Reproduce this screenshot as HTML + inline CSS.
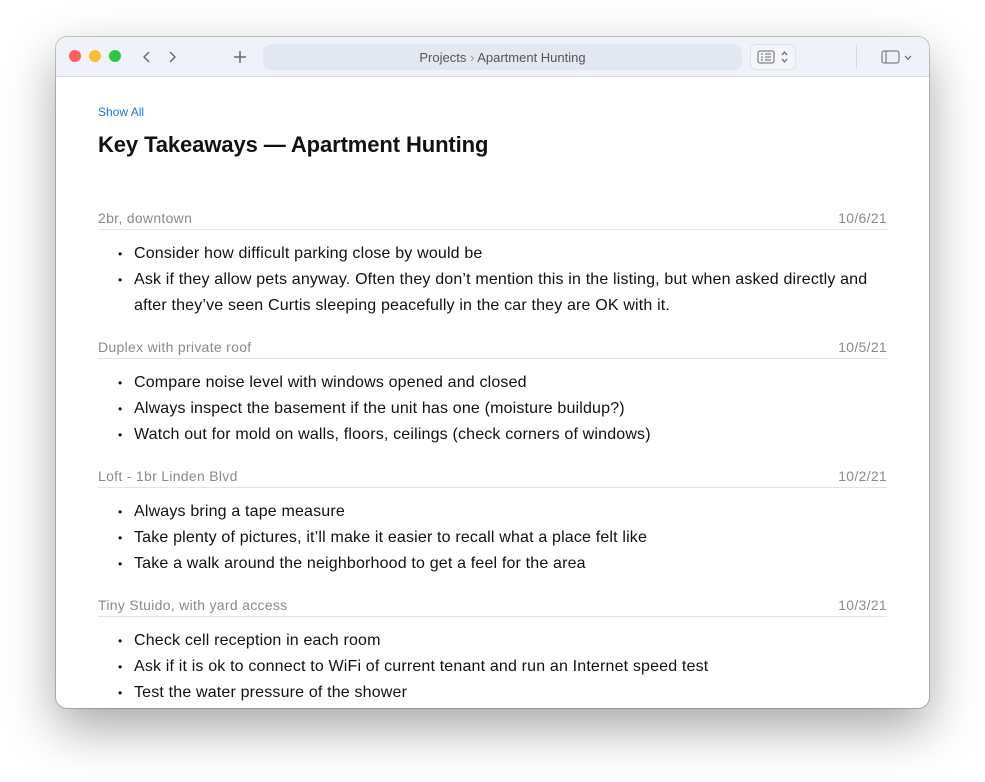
<!DOCTYPE html>
<html><head><style>
body{margin:0;width:985px;height:782px;background:#fff;font-family:"Liberation Sans",sans-serif;position:relative;overflow:hidden}
.win{position:absolute;left:56px;top:37px;width:873px;height:671px;border-radius:11px;background:#fff;overflow:hidden;box-shadow:0 20px 50px rgba(0,0,0,.35),0 0 0 1px rgba(0,0,0,.2)}
.tb{position:absolute;left:0;top:0;width:873px;height:39px;background:#eff2f9;border-bottom:1px solid #d9d9dc}
.dot{position:absolute;top:13px;width:12px;height:12px;border-radius:50%}
.t{position:absolute;white-space:nowrap;line-height:26px}
.h{font-size:14px;color:#8a8a8e;letter-spacing:.3px}
.b{font-size:16px;color:#111;letter-spacing:.17px}
.d{font-size:12px}
.r{position:absolute;left:42px;width:789px;height:1px;background:#e3e3e6}
</style></head><body>
<div class="win">
<div class="tb">
 <div class="dot" style="left:13px;background:#fe5f57"></div>
 <div class="dot" style="left:33px;background:#febc2e"></div>
 <div class="dot" style="left:53px;background:#28c840"></div>
 <svg style="position:absolute;left:84px;top:12px" width="14" height="16"><path d="M9 3L4 8l5 5" fill="none" stroke="#666" stroke-width="1.4"/></svg>
 <svg style="position:absolute;left:109px;top:12px" width="14" height="16"><path d="M5 3l5 5-5 5" fill="none" stroke="#666" stroke-width="1.4"/></svg>
 <svg style="position:absolute;left:177px;top:13px" width="14" height="14"><path d="M7 1v12M1 7h12" stroke="#666" stroke-width="1.5"/></svg>
 <div style="position:absolute;left:207px;top:7px;width:479px;height:26px;border-radius:8px;background:#e3e7ef"></div>
 <div class="t" style="left:207px;width:479px;top:8px;text-align:center;font-size:13px;color:#555">Projects <span style="color:#999">›</span> Apartment Hunting</div>
 <div style="position:absolute;left:694px;top:7px;width:44px;height:24px;border-radius:6px;background:#f3f5fa;border:1px solid #e0e3ea"></div>
 <svg style="position:absolute;left:701px;top:13px" width="34" height="14"><rect x="1" y="1" width="16" height="12" rx="2" fill="none" stroke="#666"/><path d="M4 4h2M8 4h6M4 7h2M8 7h6M4 10h2M8 10h6" stroke="#666"/><path d="M25 5l2.5-3 2.5 3M25 9l2.5 3 2.5-3" fill="none" stroke="#666" stroke-width="1.2"/></svg>
 <div style="position:absolute;left:800px;top:8px;width:1px;height:24px;background:#d5d8df"></div>
 <svg style="position:absolute;left:825px;top:12px" width="36" height="16"><rect x="1" y="2" width="17" height="12" rx="2" fill="none" stroke="#666"/><path d="M5 2v12" stroke="#666"/><path d="M24 7l3 3 3-3" fill="none" stroke="#666" stroke-width="1.2"/></svg>
</div>
</div>
<div class="t" style="left:98px;top:99px;font-size:12px;color:#1a73e8">Show All</div>
<div class="t" style="left:98px;top:131px;font-size:22px;font-weight:bold;color:#111;line-height:28px;letter-spacing:-.1px">Key Takeaways — Apartment Hunting</div>

<div class="t h" style="left:98px;top:205px">2br, downtown</div><div class="t h" style="left:787px;width:100px;text-align:right;top:205px">10/6/21</div>
<div class="r" style="left:98px;top:229px"></div>
<div class="t b d" style="left:118px;top:241px">•</div><div class="t b" style="left:134px;top:241px">Consider how difficult parking close by would be</div>
<div class="t b d" style="left:118px;top:267px">•</div><div class="t b" style="left:134px;top:267px">Ask if they allow pets anyway. Often they don’t mention this in the listing, but when asked directly and</div>
<div class="t b" style="left:134px;top:293px">after they’ve seen Curtis sleeping peacefully in the car they are OK with it.</div>

<div class="t h" style="left:98px;top:334px">Duplex with private roof</div><div class="t h" style="left:787px;width:100px;text-align:right;top:334px">10/5/21</div>
<div class="r" style="left:98px;top:358px"></div>
<div class="t b d" style="left:118px;top:370px">•</div><div class="t b" style="left:134px;top:370px">Compare noise level with windows opened and closed</div>
<div class="t b d" style="left:118px;top:396px">•</div><div class="t b" style="left:134px;top:396px">Always inspect the basement if the unit has one (moisture buildup?)</div>
<div class="t b d" style="left:118px;top:422px">•</div><div class="t b" style="left:134px;top:422px">Watch out for mold on walls, floors, ceilings (check corners of windows)</div>

<div class="t h" style="left:98px;top:463px">Loft - 1br Linden Blvd</div><div class="t h" style="left:787px;width:100px;text-align:right;top:463px">10/2/21</div>
<div class="r" style="left:98px;top:487px"></div>
<div class="t b d" style="left:118px;top:499px">•</div><div class="t b" style="left:134px;top:499px">Always bring a tape measure</div>
<div class="t b d" style="left:118px;top:525px">•</div><div class="t b" style="left:134px;top:525px">Take plenty of pictures, it’ll make it easier to recall what a place felt like</div>
<div class="t b d" style="left:118px;top:551px">•</div><div class="t b" style="left:134px;top:551px">Take a walk around the neighborhood to get a feel for the area</div>

<div class="t h" style="left:98px;top:592px">Tiny Stuido, with yard access</div><div class="t h" style="left:787px;width:100px;text-align:right;top:592px">10/3/21</div>
<div class="r" style="left:98px;top:616px"></div>
<div class="t b d" style="left:118px;top:628px">•</div><div class="t b" style="left:134px;top:628px">Check cell reception in each room</div>
<div class="t b d" style="left:118px;top:654px">•</div><div class="t b" style="left:134px;top:654px">Ask if it is ok to connect to WiFi of current tenant and run an Internet speed test</div>
<div class="t b d" style="left:118px;top:680px;height:28px;overflow:hidden">•</div><div class="t b" style="left:134px;top:680px;height:28px;overflow:hidden">Test the water pressure of the shower</div>
</body></html>
